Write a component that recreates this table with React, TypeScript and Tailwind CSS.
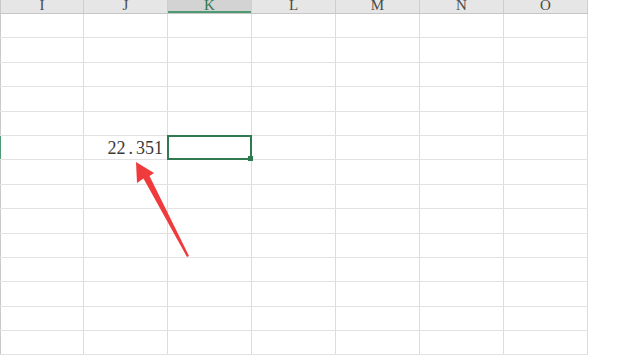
import React from 'react'

const columns = ['I', 'J', 'K', 'L', 'M', 'N', 'O']
const rowCount = 14
const activeRow = 5
const activeCol = 2

const Cell: React.FC<{ row: number; col: number }> = ({ row, col }) => {
  const isActive = row === activeRow && col === activeCol
  const leftEdge = col === 0
  const edgeColor = row === activeRow ? 'border-l-[#4f9a72]' : 'border-l-[#c9c9c9]'
  return (
    <div className={`relative w-[84px] h-full border-r border-r-[#dcdcdc] ${leftEdge ? `border-l ${edgeColor}` : ''}`}>
      {row === activeRow && col === 1 && (
        <div className="flex h-full items-center justify-end pr-[4px] pt-[1px] text-[18px] text-[#3a3a3a] font-['Liberation_Serif',serif]">
          22<span className="mx-[3px]">.</span>351
        </div>
      )}
      {isActive && (
        <div className="absolute -left-[1px] -top-[1px] -right-[1px] -bottom-[1px] z-10 border-2 border-[#2f7a50]">
          <div className="absolute -right-[3px] -bottom-[3px] w-[5px] h-[5px] bg-[#2f7a50]" />
        </div>
      )}
    </div>
  )
}

export default function App() {
  return (
    <div className="relative w-[620px] h-[361px] overflow-hidden bg-white">
      <div className="flex flex-col w-[588px]">
        {/* column header strip */}
        <div className="flex h-[14px] bg-[#e6e6e6] border-b border-[#c6c6c6] overflow-hidden">
          {columns.map((c, i) => (
            <div
              key={c}
              className={`relative w-[84px] h-full flex items-end justify-center border-r border-r-[#cfcfcf] ${
                i === 0 ? 'border-l border-l-[#c9c9c9]' : ''
              } ${i === activeCol ? 'bg-[#d3d3d3] text-[#2f7a50]' : 'text-[#4a4a4a]'}`}
            >
              <span className="text-[15px] leading-[15px] font-['Liberation_Serif',serif]">{c}</span>
              {i === activeCol && <div className="absolute left-0 right-0 bottom-0 h-[2px] bg-[#4f9a72]" />}
            </div>
          ))}
        </div>
        {/* sheet body */}
        {Array.from({ length: rowCount }).map((_, r) => (
          <div key={r} className="flex h-[24.4px] border-b border-[#e2e2e2]">
            {columns.map((c, i) => (
              <Cell key={c} row={r} col={i} />
            ))}
          </div>
        ))}
      </div>
      {/* pointer arrow */}
      <svg className="absolute left-0 top-0 z-20" width="620" height="361" viewBox="0 0 620 361">
        <polygon
          points="136,162 154,173 149.5,176 189,256 187,257 143.5,178.5 137,183"
          fill="#ef3b3b"
        />
      </svg>
    </div>
  )
}
